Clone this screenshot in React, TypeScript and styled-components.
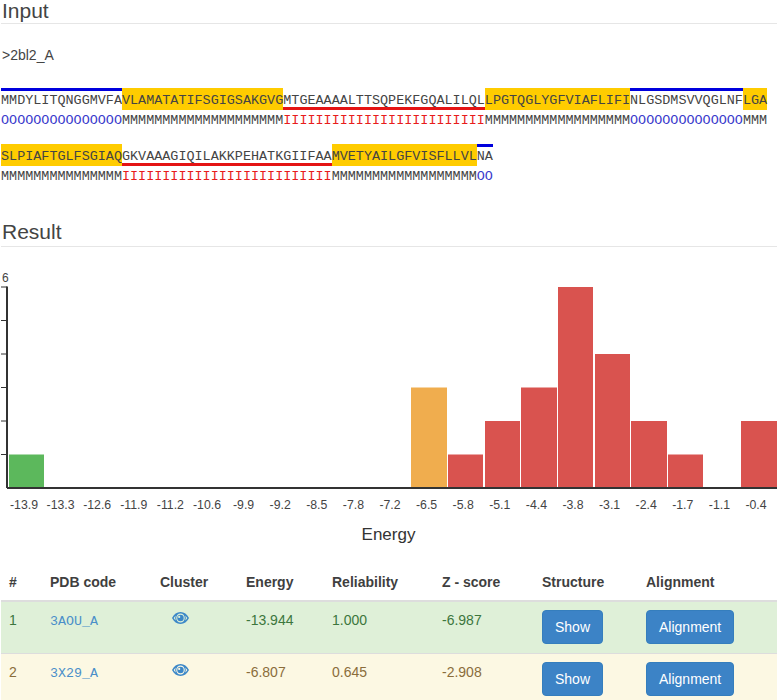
import React from "react";
import styled, { createGlobalStyle } from "styled-components";

const Global = createGlobalStyle`
  html, body { margin: 0; padding: 0; background: #fff; overflow: hidden; }
  body { font-family: "Liberation Sans", Arial, sans-serif; font-size: 14px; line-height: 20px; color: #333; }
`;

const Page = styled.div`
  width: 776px;
  height: 700px;
  padding: 0 1px;
  overflow: hidden;
`;

const Heading = styled.h3<{ $top?: number; $height?: number }>`
  margin: ${(p) => p.$top ?? 0}px 0 0;
  height: ${(p) => p.$height ?? 23}px;
  padding-left: 1px;
  font-size: 21px;
  line-height: 21px;
  font-weight: 400;
  color: #444;
  border-bottom: 1px solid #e6e6e6;
  box-sizing: content-box;
`;

const Fasta = styled.div`
  margin: 21px 0 0 1px;
  height: 20px;
  font-size: 14px;
  line-height: 20px;
  color: #444;
`;

const Sequence = styled.div`
  margin-top: 23px;
  display: flex;
  flex-direction: column;
  gap: 12px;
`;

const Block = styled.div`
  display: flex;
  flex-direction: column;
`;

const Line = styled.div`
  display: flex;
  font-family: "Liberation Mono", "Courier New", monospace;
  font-size: 13.44px;
  color: #444;
`;

type Kind = "O" | "M" | "I";

const Residues = styled.span<{ $kind: Kind }>`
  display: block;
  height: 22px;
  box-sizing: border-box;
  line-height: 20px;
  white-space: pre;
  background: ${(p) => (p.$kind === "M" ? "#ffcc00" : "transparent")};
  border-top: 3px solid ${(p) => (p.$kind === "O" ? "#0000dd" : "transparent")};
  border-bottom: 3px solid ${(p) => (p.$kind === "I" ? "#e41414" : "transparent")};
`;

const States = styled.span<{ $kind: Kind }>`
  display: block;
  height: 22px;
  line-height: 21px;
  white-space: pre;
  color: ${(p) => (p.$kind === "O" ? "#3a3acc" : p.$kind === "I" ? "#e81c1c" : "#444")};
`;

const Chart = styled.svg`
  display: block;
  width: 776px;
  height: 317px;
  font-family: "Liberation Sans", Arial, sans-serif;
`;

const Table = styled.table`
  width: 776px;
  table-layout: fixed;
  border-collapse: collapse;
  border-spacing: 0;
`;

const Th = styled.th`
  padding: 8px;
  text-align: left;
  font-weight: 700;
  line-height: 20px;
  color: #3f3f3f;
  border-bottom: 2px solid #ddd;
`;

const Row = styled.tr<{ $tone: "success" | "warning" }>`
  background: ${(p) => (p.$tone === "success" ? "#dff0d8" : "#fcf8e3")};
  color: ${(p) => (p.$tone === "success" ? "#3c763d" : "#8a6d3b")};
`;

const Td = styled.td`
  height: 35px;
  padding: 8px 8px 8px;
  vertical-align: top;
  line-height: 20px;
  border-top: 1px solid #ddd;
`;

const Code = styled.a`
  font-family: "Liberation Mono", "Courier New", monospace;
  font-size: 13.3px;
  color: #4a8fc9;
`;

const EyeIcon = styled.svg`
  display: block;
  width: 17px;
  height: 12px;
  margin: 2px 0 0 12px;
  fill: #3b87c8;
`;

const Button = styled.button`
  display: block;
  height: 34px;
  padding: 6px 12px;
  font-family: "Liberation Sans", Arial, sans-serif;
  font-size: 14px;
  line-height: 20px;
  color: #fff;
  background: #3c83c6;
  border: 1px solid #357ebd;
  border-radius: 4px;
`;

type Segment = { kind: Kind; text: string };

const rows: Segment[][] = [
  [
    { kind: "O", text: "MMDYLITQNGGMVFA" },
    { kind: "M", text: "VLAMATATIFSGIGSAKGVG" },
    { kind: "I", text: "MTGEAAAALTTSQPEKFGQALILQL" },
    { kind: "M", text: "LPGTQGLYGFVIAFLIFI" },
    { kind: "O", text: "NLGSDMSVVQGLNF" },
    { kind: "M", text: "LGA" },
  ],
  [
    { kind: "M", text: "SLPIAFTGLFSGIAQ" },
    { kind: "I", text: "GKVAAAGIQILAKKPEHATKGIIFAA" },
    { kind: "M", text: "MVETYAILGFVISFLLVL" },
    { kind: "O", text: "NA" },
  ],
];

const BASE = 488;
const UNIT = 33.5;

const bars = [
  { x: 9, w: 35, n: 1, c: "#5cb85c" },
  { x: 411, w: 36, n: 3, c: "#f0ad4e" },
  { x: 448, w: 35, n: 1, c: "#d9534f" },
  { x: 485, w: 35, n: 2, c: "#d9534f" },
  { x: 521, w: 36, n: 3, c: "#d9534f" },
  { x: 558, w: 35, n: 6, c: "#d9534f" },
  { x: 595, w: 35, n: 4, c: "#d9534f" },
  { x: 631, w: 36, n: 2, c: "#d9534f" },
  { x: 668, w: 35, n: 1, c: "#d9534f" },
  { x: 741, w: 36, n: 2, c: "#d9534f" },
];

const labels = [
  "-13.9", "-13.3", "-12.6", "-11.9", "-11.2", "-10.6", "-9.9", "-9.2", "-8.5", "-7.8", "-7.2",
  "-6.5", "-5.8", "-5.1", "-4.4", "-3.8", "-3.1", "-2.4", "-1.7", "-1.1", "-0.4",
];

const columns = [
  { title: "#", width: 41 },
  { title: "PDB code", width: 110 },
  { title: "Cluster", width: 86 },
  { title: "Energy", width: 86 },
  { title: "Reliability", width: 110 },
  { title: "Z - score", width: 100 },
  { title: "Structure", width: 104 },
  { title: "Alignment", width: 139 },
];

const results = [
  { id: 1, code: "3AOU_A", energy: "-13.944", rel: "1.000", z: "-6.987", tone: "success" as const },
  { id: 2, code: "3X29_A", energy: "-6.807", rel: "0.645", z: "-2.908", tone: "warning" as const },
];

function Eye() {
  return (
    <EyeIcon viewBox="0 0 17 12" aria-hidden="true">
      <path
        fillRule="evenodd"
        d="M8.5 0C4.9 0 1.9 2.3 0 6c1.9 3.7 4.9 6 8.5 6s6.6-2.3 8.5-6C15.1 2.3 12.100 0 8.500 0ZM8.500 1.500C10.900 1.500 12.800 3.500 12.800 6S10.900 10.500 8.500 10.500 4.200 8.500 4.200 6 6.100 1.500 8.500 1.500ZM1.700 6C2.300 5 3 4.100 3.900 3.400 3.500 4.200 3.200 5.100 3.200 6S3.500 7.800 3.900 8.600C3 7.900 2.300 7 1.700 6ZM13.100 3.400C14 4.100 14.700 5 15.300 6 14.700 7 14 7.900 13.100 8.600 13.500 7.800 13.800 6.900 13.800 6S13.500 4.200 13.100 3.400Z"
      />
      <path
        fillRule="evenodd"
        d="M8.500 2.800A3.200 3.200 0 1 0 8.500 9.200 3.200 3.200 0 0 0 8.500 2.800ZM7.200 3.800A1.100 1.100 0 1 1 7.200 6 1.100 1.100 0 0 1 7.200 3.800Z"
      />
    </EyeIcon>
  );
}

export default function App() {
  return (
    <Page>
      <Global />
      <Heading>Input</Heading>
      <Fasta>&gt;2bl2_A</Fasta>
      <Sequence>
        {rows.map((row, i) => (
          <Block key={i}>
            <Line>
              {row.map((s, j) => (
                <Residues key={j} $kind={s.kind}>
                  {s.text}
                </Residues>
              ))}
            </Line>
            <Line>
              {row.map((s, j) => (
                <States key={j} $kind={s.kind}>
                  {s.kind.repeat(s.text.length)}
                </States>
              ))}
            </Line>
          </Block>
        ))}
      </Sequence>
      <Heading $top={33} $height={25}>Result</Heading>
      <Chart viewBox="1 247 776 317">
        <text x="2" y="282" fontSize="12" fill="#444">6</text>
        {bars.map((b) => (
          <rect key={b.x} x={b.x} y={BASE - b.n * UNIT} width={b.w} height={b.n * UNIT} fill={b.c} />
        ))}
        <path d="M7 286.500V488M7 488H777" stroke="#333" strokeWidth="2" fill="none" />
        {[0, 1, 2, 3, 4, 5].map((i) => (
          <line key={i} x1="1" x2="7" y1={287 + i * UNIT} y2={287 + i * UNIT} stroke="#333" strokeWidth="1" />
        ))}
        {labels.map((l, i) => (
          <text key={l} x={24 + i * 36.6} y="509" fontSize="12.300" fill="#444" textAnchor="middle">
            {l}
          </text>
        ))}
        <text x="388.500" y="540" fontSize="17" fill="#333" textAnchor="middle">Energy</text>
      </Chart>
      <Table>
        <colgroup>
          {columns.map((c) => (
            <col key={c.title} width={c.width} />
          ))}
        </colgroup>
        <thead>
          <tr>
            {columns.map((c) => (
              <Th key={c.title}>{c.title}</Th>
            ))}
          </tr>
        </thead>
        <tbody>
          {results.map((r) => (
            <Row key={r.id} $tone={r.tone}>
              <Td>{r.id}</Td>
              <Td>
                <Code>{r.code}</Code>
              </Td>
              <Td>
                <Eye />
              </Td>
              <Td>{r.energy}</Td>
              <Td>{r.rel}</Td>
              <Td>{r.z}</Td>
              <Td>
                <Button>Show</Button>
              </Td>
              <Td>
                <Button>Alignment</Button>
              </Td>
            </Row>
          ))}
        </tbody>
      </Table>
    </Page>
  );
}
